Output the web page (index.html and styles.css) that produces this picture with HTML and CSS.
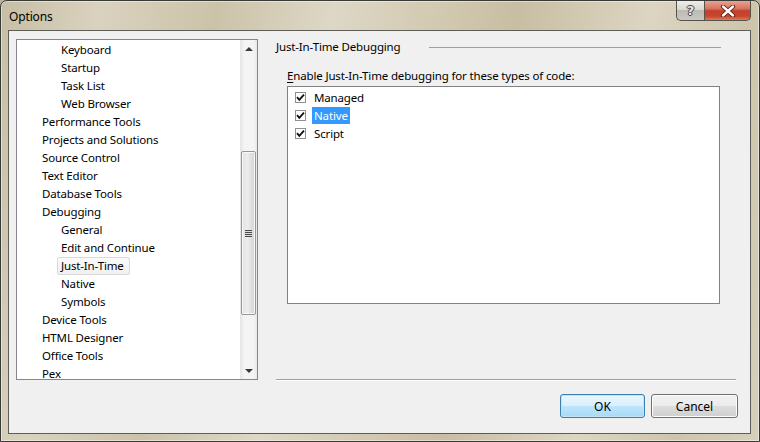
FILE: index.html
```html
<!DOCTYPE html>
<html>
<head>
<meta charset="utf-8">
<title>Options</title>
<link rel="stylesheet" href="styles.css">
</head>
<body>
<div class="window">
  <div class="titlebar">
    <span class="title">Options</span>
    <div class="caption-buttons">
      <div class="cap help"><span class="help-glyph">?</span></div>
      <div class="cap close">
        <svg width="18" height="12" viewBox="0 0 18 12">
          <path d="M4 1.5 L14 10.5 M14 1.5 L4 10.5" stroke="#5a1a12" stroke-width="4.2" stroke-linecap="round"/>
          <path d="M4 1.5 L14 10.5 M14 1.5 L4 10.5" stroke="#ffffff" stroke-width="2.4" stroke-linecap="round"/>
        </svg>
      </div>
    </div>
  </div>
  <div class="client">
    <div class="tree">
      <ul class="tree-list">
        <li class="l2">Keyboard</li>
        <li class="l2">Startup</li>
        <li class="l2">Task List</li>
        <li class="l2">Web Browser</li>
        <li class="l1">Performance Tools</li>
        <li class="l1">Projects and Solutions</li>
        <li class="l1">Source Control</li>
        <li class="l1">Text Editor</li>
        <li class="l1">Database Tools</li>
        <li class="l1">Debugging</li>
        <li class="l2">General</li>
        <li class="l2">Edit and Continue</li>
        <li class="l2"><span class="selected">Just-In-Time</span></li>
        <li class="l2">Native</li>
        <li class="l2">Symbols</li>
        <li class="l1">Device Tools</li>
        <li class="l1">HTML Designer</li>
        <li class="l1">Office Tools</li>
        <li class="l1">Pex</li>
      </ul>
      <div class="vscroll">
        <div class="arrow"><span class="tri up"></span></div>
        <div class="track">
          <div class="thumb"><span class="grip"></span></div>
        </div>
        <div class="arrow"><span class="tri down"></span></div>
      </div>
    </div>
    <div class="panel">
      <div class="group-header">
        <span>Just-In-Time Debugging</span>
        <div class="rule"></div>
      </div>
      <div class="label"><u>E</u>nable Just-In-Time debugging for these types of code:</div>
      <div class="checklist">
        <div class="check-item">
          <span class="checkbox"><svg width="11" height="11" viewBox="0 0 11 11"><path d="M2 5.2 L4.3 7.8 L9 2.6" fill="none" stroke="#111" stroke-width="1.8"/></svg></span>
          <span class="item-text">Managed</span>
        </div>
        <div class="check-item">
          <span class="checkbox"><svg width="11" height="11" viewBox="0 0 11 11"><path d="M2 5.2 L4.3 7.8 L9 2.6" fill="none" stroke="#111" stroke-width="1.8"/></svg></span>
          <span class="item-text highlighted">Native</span>
        </div>
        <div class="check-item">
          <span class="checkbox"><svg width="11" height="11" viewBox="0 0 11 11"><path d="M2 5.2 L4.3 7.8 L9 2.6" fill="none" stroke="#111" stroke-width="1.8"/></svg></span>
          <span class="item-text">Script</span>
        </div>
      </div>
      <div class="separator"></div>
      <div class="buttons">
        <button class="btn default">OK</button>
        <button class="btn">Cancel</button>
      </div>
    </div>
  </div>
</div>
</body>
</html>
```
FILE: styles.css
```css
* { box-sizing: border-box; }
html, body { margin: 0; padding: 0; }
body {
  width: 760px;
  height: 442px;
  overflow: hidden;
  font-family: "Noto Sans", "DejaVu Sans", sans-serif;
  font-size: 11.5px;
  letter-spacing: -0.15px;
  color: #000;
  background: #b8b09a;
}
.window {
  width: 760px;
  height: 442px;
  display: flex;
  flex-direction: column;
  border: 1px solid #3a3a36;
  border-radius: 7px 7px 0 0;
  background:
    linear-gradient(100deg, #c6bea4 0%, #d9d2bf 12%, #cbc3a9 26%, #ddd7c6 40%, #d2cab2 52%, #c8bea3 62%, #dcd5c2 78%, #cdc5ab 90%, #d6cfba 100%);
  box-shadow: inset 0 0 0 1px rgba(255,255,255,0.45);
}
.titlebar {
  height: 29px;
  display: flex;
  align-items: flex-start;
  flex-shrink: 0;
}
.title {
  margin: 8px 0 0 8px;
  line-height: 16px;
  font-size: 12px;
  color: #000;
}
.caption-buttons {
  margin-left: auto;
  margin-right: 8px;
  display: flex;
  height: 20px;
}
.cap {
  height: 20px;
  display: flex;
  align-items: center;
  justify-content: center;
  border: 1px solid #55534c;
  border-top: none;
}
.help {
  width: 28px;
  border-radius: 0 0 0 5px;
  border-right: none;
  background: linear-gradient(#eeeeea 0%, #d9d8d2 45%, #bdbbb3 50%, #c9c8c1 100%);
}
.help-glyph {
  font-family: "DejaVu Sans", sans-serif;
  font-weight: bold;
  font-size: 13px;
  line-height: 13px;
  color: #e9e9e9;
  text-shadow: -1px 0 #444, 1px 0 #444, 0 -1px #444, 0 1px #444;
}
.close {
  width: 47px;
  border-radius: 0 0 5px 0;
  background: linear-gradient(#e9a394 0%, #d9735f 40%, #c2412a 52%, #c8462f 80%, #e07a5a 100%);
}
.client {
  flex: 1;
  margin: 0 8px 7px 7px;
  border: 1px solid #5e5c56;
  background: #f0f0f0;
  display: flex;
  align-items: flex-start;
}
.tree {
  margin: 8px 0 0 7px;
  width: 242px;
  height: 341px;
  border: 1px solid #828790;
  background: #fff;
  display: flex;
  overflow: hidden;
}
.tree-list {
  list-style: none;
  margin: 0;
  padding: 1px 0 0 0;
  flex: 1;
  overflow: hidden;
}
.tree-list li {
  height: 18px;
  line-height: 18px;
  white-space: nowrap;
}
.tree-list .l1 { padding-left: 25px; }
.tree-list .l2 { padding-left: 44px; }
.selected {
  display: inline-block;
  height: 18px;
  line-height: 16px;
  margin-left: -4px;
  padding: 0 5px 0 3px;
  border: 1px solid #d9d9d9;
  border-radius: 2px;
  background: linear-gradient(#fafafa, #f0f0f0);
}
.vscroll {
  width: 17px;
  display: flex;
  flex-direction: column;
  background: linear-gradient(90deg, #e4e4e4 0%, #f4f4f4 25%, #f4f4f4 80%, #e8e8e8 100%);
}
.arrow {
  height: 17px;
  display: flex;
  align-items: center;
  justify-content: center;
}
.tri {
  width: 0;
  height: 0;
  border-left: 4px solid transparent;
  border-right: 4px solid transparent;
}
.tri.up { border-bottom: 4px solid #3a3a3a; }
.tri.down { border-top: 4px solid #3a3a3a; }
.track {
  flex: 1;
  padding-top: 94px;
}
.thumb {
  margin: 0 1px;
  height: 164px;
  border: 1px solid #979797;
  border-radius: 2px;
  background: linear-gradient(90deg, #e2e2e2 0%, #ededed 40%, #e4e4e4 60%, #d3d3d3 100%);
  box-shadow: inset 0 0 0 1px #f8f8f8;
  display: flex;
  align-items: center;
  justify-content: center;
}
.grip {
  width: 7px;
  height: 7px;
  background: repeating-linear-gradient(#4a4a4a 0 1px, #dadada 1px 2px);
}
.panel {
  margin: 8px 0 0 18px;
  width: 460px;
  display: flex;
  flex-direction: column;
}
.group-header {
  height: 16px;
  line-height: 16px;
  display: flex;
  align-items: center;
  white-space: nowrap;
}
.rule {
  flex: 1;
  margin: 0 15px 0 28px;
  height: 1px;
  background: #a0a0a0;
}
.label {
  margin: 13px 0 0 11px;
  height: 16px;
  line-height: 16px;
  white-space: nowrap;
}
.label u { text-decoration-thickness: 1px; text-underline-offset: 2px; }
.checklist {
  margin: 2px 0 0 11px;
  width: 433px;
  height: 218px;
  border: 1px solid #828282;
  background: #fff;
  padding-top: 1px;
}
.check-item {
  height: 18px;
  display: flex;
  align-items: center;
  padding-left: 7px;
}
.checkbox {
  width: 11px;
  height: 11px;
  border: 1px solid #8e8f8f;
  background: #fff;
  display: flex;
  margin-right: 8px;
}
.checkbox svg { display: block; margin: -1px; }
.item-text {
  height: 17px;
  line-height: 17px;
  padding: 0 2px;
  margin-left: -2px;
}
.highlighted {
  background: #3399ff;
  color: #fff;
}
.separator {
  margin-top: 75px;
  height: 2px;
  border-top: 1px solid #a0a0a0;
  border-bottom: 1px solid #ffffff;
}
.buttons {
  margin-top: 13px;
  margin-right: -2px;
  display: flex;
  justify-content: flex-end;
  gap: 6px;
}
.btn {
  height: 24px;
  font-family: inherit;
  font-size: 12px;
  color: #000;
  border: 1px solid #707070;
  border-radius: 3px;
  padding: 0;
  background: linear-gradient(#f2f2f2 0%, #ebebeb 49%, #dddddd 50%, #cfcfcf 100%);
  box-shadow: inset 0 0 0 1px #fcfcfc;
}
.btn.default {
  width: 85px;
  border-color: #3c7fb1;
  background: linear-gradient(#eaf6fd 0%, #d9f0fc 49%, #bee6fd 50%, #a7d9f5 100%);
  box-shadow: inset 0 0 0 1px #c2e4f6;
}
.btn:not(.default) { width: 87px; }
```
